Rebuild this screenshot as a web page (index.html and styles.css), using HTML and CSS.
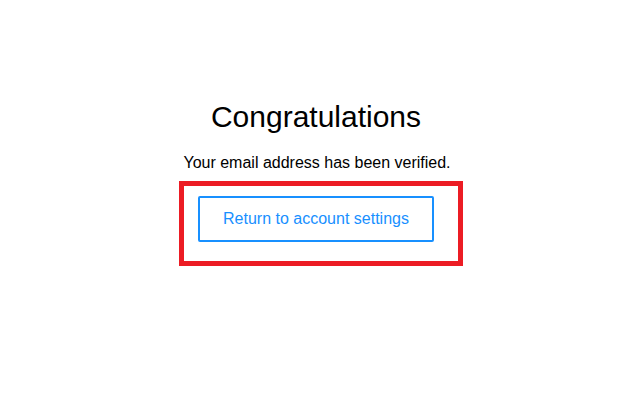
FILE: index.html
```html
<!DOCTYPE html>
<html>
<head>
<meta charset="utf-8">
<link rel="stylesheet" href="styles.css">
</head>
<body>
<main class="page">
  <h1 class="title">Congratulations</h1>
  <p class="message">Your email address has been verified.</p>
  <div class="highlight">
    <button class="btn">Return to account settings</button>
  </div>
</main>
</body>
</html>
```
FILE: styles.css
```css
html, body {
  margin: 0;
  padding: 0;
  background: #fff;
}
.page {
  font-family: "Liberation Sans", Arial, sans-serif;
  display: flex;
  flex-direction: column;
  align-items: center;
  padding-top: 99px;
}
.title {
  margin: 0 0 0 1px;
  font-size: 30px;
  font-weight: normal;
  color: #000;
  line-height: 35px;
}
.message {
  margin: 20px 0 0 3px;
  font-size: 16px;
  line-height: 18px;
  color: #000;
}
.highlight {
  margin-top: 9px;
  margin-left: 11px;
  border: 5px solid #ec1c24;
  padding: 10px 24px 19px 14px;
}
.btn {
  display: block;
  box-sizing: border-box;
  width: 236px;
  height: 46px;
  border: 2px solid #1890ff;
  border-radius: 2px;
  background: #fff;
  color: #1890ff;
  font-family: "Liberation Sans", Arial, sans-serif;
  font-size: 16px;
  padding: 0;
}
```
